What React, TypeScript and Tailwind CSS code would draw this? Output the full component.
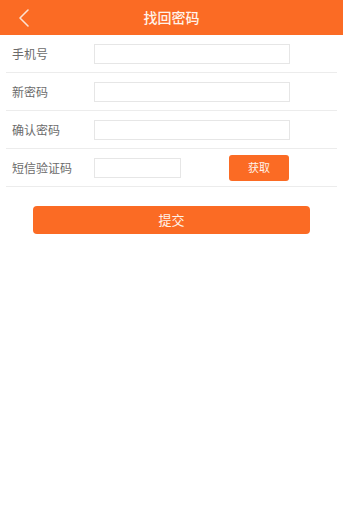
import React from "react";

const font = { fontFamily: '"Noto Sans CJK SC", "Noto Sans", sans-serif' };

function Row({ label, children }: { label: string; children: React.ReactNode }) {
  return (
    <div className="mx-[6px] h-[38px] border-b border-[#ececec] flex items-center">
      <div className="w-[88px] pl-[6px] text-[12px] text-[#6b6b6b]">{label}</div>
      {children}
    </div>
  );
}

export default function App() {
  return (
    <div className="w-[343px] h-[525px] bg-white" style={font}>
      <div className="h-[35px] bg-[#fb6b24] flex items-center relative">
        <div className="w-[48px] h-full flex items-center pl-[17px]">
          <svg width="14" height="20" viewBox="0 0 14 20" fill="none">
            <path d="M11 2 L3 10 L11 18" stroke="#fde2d2" strokeWidth="1.6" strokeLinecap="round" strokeLinejoin="round" />
          </svg>
        </div>
        <div className="absolute inset-0 flex items-center justify-center text-[14px] font-medium text-[#fff3ea] pointer-events-none">
          找回密码
        </div>
      </div>
      <Row label="手机号">
        <div className="w-[196px] h-[20px] border border-[#e6e6e6] bg-white" />
      </Row>
      <Row label="新密码">
        <div className="w-[196px] h-[20px] border border-[#e6e6e6] bg-white" />
      </Row>
      <Row label="确认密码">
        <div className="w-[196px] h-[20px] border border-[#e6e6e6] bg-white" />
      </Row>
      <Row label="短信验证码">
        <div className="w-[87px] h-[20px] border border-[#e6e6e6] bg-white" />
        <div className="ml-[48px] w-[60px] h-[26px] rounded-[3px] bg-[#fb6b24] flex items-center justify-center text-[11px] text-[#fff3ea]">
          获取
        </div>
      </Row>
      <div className="pt-[19px] pl-[33px]">
        <div className="w-[277px] h-[28px] rounded-[4px] bg-[#fb6b24] flex items-center justify-center text-[13px] text-[#fff3ea]">
          提交
        </div>
      </div>
    </div>
  );
}
